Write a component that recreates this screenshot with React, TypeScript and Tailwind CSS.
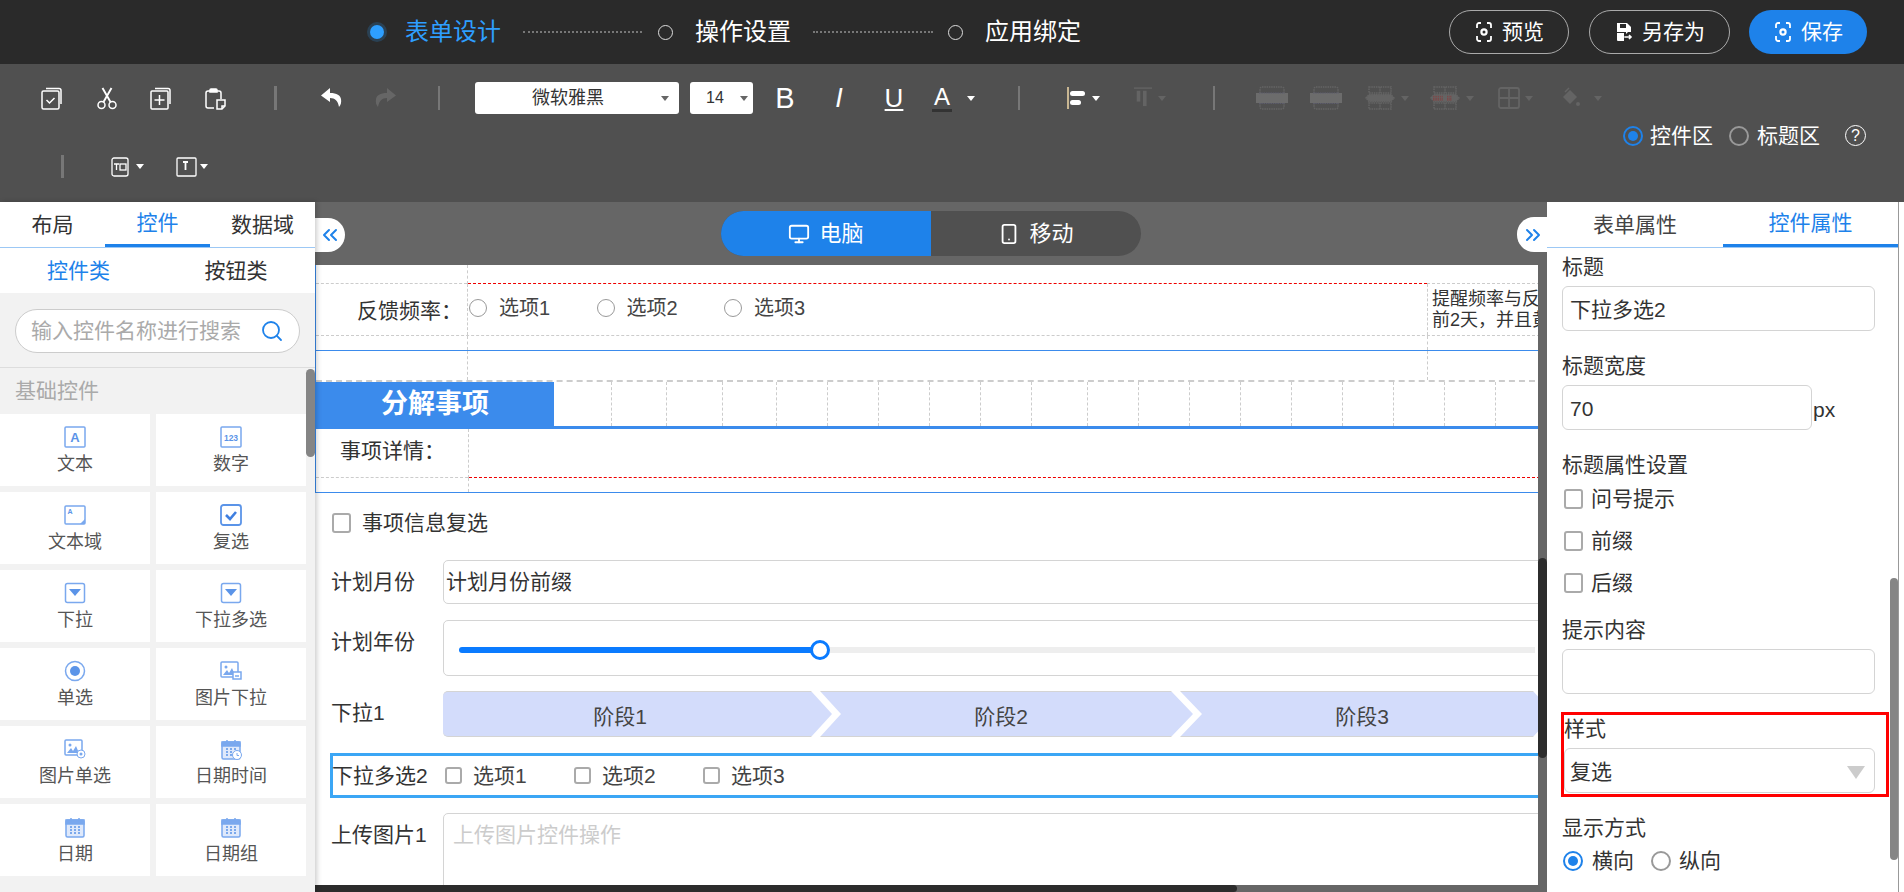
import React from "react";
import { Monitor, Smartphone, Search, ChevronsLeft, ChevronsRight } from "lucide-react";

const Caret = ({ c = "border-t-white" }: { c?: string }) => (
  <span className={`w-0 h-0 border-x-[4px] border-x-transparent border-t-[5px] ${c}`} />
);

const I = ({ children }: any) => (
  <svg width="22" height="23" viewBox="0 0 22 23" fill="none" stroke="#fff" strokeWidth={1.5}>{children}</svg>
);

const Cell = ({ children, cls = "w-[54px]" }: any) => <div className={`${cls} flex justify-center items-center shrink-0`}>{children}</div>;

const Scan = () => (
  <svg width="20" height="24" viewBox="0 0 20 24" fill="none" stroke="#fff" strokeWidth="1.8">
    <path d="M7 3H5a2 2 0 0 0-2 2v3M13 3h2a2 2 0 0 1 2 2v3M7 21H5a2 2 0 0 1-2-2v-3M13 21h2a2 2 0 0 0 2-2v-3" />
    <circle cx="10" cy="12" r="2.6" strokeWidth="2.2" />
  </svg>
);

const DG = "#646464";

const Split = ({ red = false }: { red?: boolean }) => (
  <svg width="30" height="24" viewBox="0 0 30 24" fill="none" stroke={DG} strokeWidth="1.500" strokeDasharray="1.500 0.800">
    <rect x="4" y="1" width="22" height="6" />
    <path d="M15 1v6M15 17v6" />
    <rect x="4" y="17" width="22" height="6" />
    <path d="M1 12l3-3.500h22l3 3.500-3 3.500H4z" fill={DG} />
    {red && <path d="M3 10.500h10M3 12.500h10M3 14h10M17 10.500h5M17 12.500h5M17 14h5" stroke="#7a4a4a" strokeWidth="1.300" />}
  </svg>
);

const Merge = () => (
  <svg width="32" height="24" viewBox="0 0 32 24" fill="none" stroke={DG} strokeWidth="1.500" strokeDasharray="1.500 0.800">
    <rect x="4" y="1" width="24" height="22" rx="2" />
    <rect x="0" y="7" width="32" height="10" fill="#6c6c6c" stroke="none" />
    <path d="M3 17.500h26" stroke="#5c5c6c" strokeWidth="1" />
    <path d="M3 7h26" stroke="#5c5c6c" strokeWidth="1" />
  </svg>
);

const Radio = ({ on = false, size = "w-[20px] h-[20px]", off = "border-[#999]" }: any) => (
  <span className={`${size} rounded-full border-2 shrink-0 flex items-center justify-center bg-transparent ${on ? "border-[#1e82ea]" : off}`}>
    {on && <span className="w-[10px] h-[10px] rounded-full bg-[#1e82ea]" />}
  </span>
);

const Check = ({ size = "w-[19px] h-[20px]" }: { size?: string }) => (
  <span className={`${size} rounded-[3px] border-2 border-[#aaa] bg-white shrink-0`} />
);

function TopBar() {
  return (
    <div className="h-[64px] bg-[#2a2a2a] flex items-center shrink-0">
      <span className="ml-[370px] w-[14px] h-[14px] rounded-full bg-[#2e9fff] shadow-[0_0_0_3px_rgba(46,159,255,0.2)]" />
      <span className="ml-[21px] w-[97px] text-[24px] leading-[30px] text-[#2e9fff] whitespace-nowrap">表单设计</span>
      <span className="ml-[21px] w-[119px] border-t-2 border-dotted border-[#777]" />
      <span className="ml-[16px] w-[15px] h-[15px] rounded-full border-[1.5px] border-[#ddd]" />
      <span className="ml-[22px] w-[96px] text-[24px] leading-[30px] text-white whitespace-nowrap">操作设置</span>
      <span className="ml-[22px] w-[120px] border-t-2 border-dotted border-[#777]" />
      <span className="ml-[15px] w-[15px] h-[15px] rounded-full border-[1.5px] border-[#ddd]" />
      <span className="ml-[22px] w-[96px] text-[24px] leading-[30px] text-white whitespace-nowrap">应用绑定</span>
      <div className="ml-auto mr-[37px] flex items-center">
        <button className="w-[120px] h-[44px] rounded-full border border-[#aaa] text-white text-[21px] flex items-center justify-center gap-[8px]"><Scan />预览</button>
        <button className="ml-[20px] w-[141px] h-[44px] rounded-full border border-[#aaa] text-white text-[21px] flex items-center justify-center gap-[8px]">
          <svg width="20" height="22" viewBox="0 0 20 22" fill="#fff"><path d="M3 2h10l4 4v5h-3l-2 2v-2H3zM6 3v4h6V3zM3 12h7v3l1 1-1 1v3H4a1 1 0 0 1-1-1z" /><path d="M11 16h6m-2-2 2 2-2 2" stroke="#fff" strokeWidth="1.6" fill="none" /></svg>
          另存为
        </button>
        <button className="ml-[19px] w-[118px] h-[44px] rounded-full bg-[#1e82ea] text-white text-[21px] flex items-center justify-center gap-[8px]"><Scan />保存</button>
      </div>
    </div>
  );
}

function Toolbar() {
  return (
    <div className="h-[138px] bg-[#505050] shrink-0 pt-[18px]">
      <div className="h-[32px] flex items-center pl-[25px]">
        <Cell>
          <I><path d="M5 1.500h13a2 2 0 0 1 2 2V17" /><rect x="1" y="4" width="17" height="18" rx="1.500" /><path d="m5.500 13 3 3 5-5" /></I>
        </Cell>
        <Cell cls="w-[55px]">
          <I><circle cx="5.500" cy="18" r="3.500" /><circle cx="16.500" cy="18" r="3.500" /><path d="M7.500 15 15.500 1M14.500 15 6.500 1" strokeWidth="1.900" /></I>
        </Cell>
        <Cell>
          <I><path d="M5 1.500h13a2 2 0 0 1 2 2V17" /><rect x="1" y="4" width="17" height="18" rx="1" /><path d="M9.500 8v10M4.500 13h10" /></I>
        </Cell>
        <Cell>
          <I><path d="M10 21H4a2 2 0 0 1-2-2V6a2 2 0 0 1 2-2h11a2 2 0 0 1 2 2v6" /><path d="M6 5V3a1 1 0 0 1 1-1h5a1 1 0 0 1 1 1v2z" fill="#fff" /><path d="M13 13h8v6l-3 3h-5z" fill="#505050" /><path d="M18 22v-3h3" /></I>
        </Cell>
        <span className="ml-[32px] w-[3px] h-[24px] bg-[#777]" />
        <div className="ml-[27px] flex">
          <Cell><svg width="21" height="21" viewBox="0 0 21 21" fill="#fff"><path d="M9 0 0 7.500 9 14v-4c5 0 8 3 9 9 2-2 2.500-5 2-8-.7-3.500-4-6-11-6z" /></svg></Cell>
          <Cell><svg width="21" height="21" viewBox="0 0 21 21" fill="#666"><path d="M12 0l9 7.500L12 14v-4c-5 0-8 3-9 9-2-2-2.500-5-2-8 .7-3.500 4-6 11-6z" /></svg></Cell>
        </div>
        <span className="ml-[26px] w-[2px] h-[24px] bg-[#777]" />
        <div className="ml-[35px] w-[204px] h-[32px] bg-white rounded-[3px] flex items-center relative">
          <span className="w-[186px] text-center text-[18px] text-[#333]">微软雅黑</span>
          <Caret c="border-t-[#666]" />
        </div>
        <div className="ml-[11px] w-[63px] h-[32px] bg-white rounded-[3px] flex items-center">
          <span className="w-[50px] text-center text-[16px] text-[#333]">14</span>
          <Caret c="border-t-[#666]" />
        </div>
        <Cell cls="ml-[5px] w-[54px]"><span className="text-[29px] leading-[32px] text-white font-medium">B</span></Cell>
        <Cell cls="w-[54px]"><span className="text-[27px] leading-[32px] text-white italic">I</span></Cell>
        <Cell cls="ml-[1px] w-[54px]"><span className="text-[26px] leading-[28px] text-white underline underline-offset-2">U</span></Cell>
        <div className="ml-[11px] w-[20px] flex flex-col items-center">
          <span className="text-[24px] leading-[24px] text-white font-medium">A</span>
          <span className="w-[20px] h-[3px] bg-[#333]" />
        </div>
        <span className="ml-[15px] flex"><Caret /></span>
        <span className="ml-[43px] w-[2px] h-[24px] bg-[#777]" />
        <span className="ml-[47px] w-[18px] flex">
          <svg width="18" height="24" viewBox="0 0 18 24"><path d="M1 1v22" stroke="#f0d8a8" strokeWidth="1.5" /><rect x="3" y="5" width="15" height="5" rx="2.500" fill="#fff" /><rect x="3" y="14" width="11" height="5" rx="2.500" fill="#fff" /></svg>
        </span>
        <span className="ml-[7px] flex"><Caret /></span>
        <span className="ml-[34px] w-[18px] flex">
          <svg width="20" height="24" viewBox="0 0 20 24"><path d="M0 1h20" stroke={DG} strokeWidth="1.500" /><rect x="3" y="4" width="4" height="12" fill={DG} /><rect x="10" y="4" width="4" height="17" fill={DG} /></svg>
        </span>
        <span className="ml-[6px] flex"><Caret c="border-t-[#646464]" /></span>
        <span className="ml-[47px] w-[2px] h-[24px] bg-[#777]" />
        <span className="ml-[41px] flex"><Merge /></span>
        <span className="ml-[22px] flex"><Merge /></span>
        <span className="ml-[23px] flex"><Split /></span>
        <span className="ml-[6px] flex"><Caret c="border-t-[#646464]" /></span>
        <span className="ml-[21px] flex"><Split red /></span>
        <span className="ml-[6px] flex"><Caret c="border-t-[#646464]" /></span>
        <span className="ml-[24px] flex">
          <svg width="22" height="22" viewBox="0 0 22 22" fill="none" stroke={DG} strokeWidth="1.800"><rect x="1" y="1" width="20" height="20" rx="2" /><path d="M11 1v20M1 11h20" /></svg>
        </span>
        <span className="ml-[5px] flex"><Caret c="border-t-[#646464]" /></span>
        <span className="ml-[28px] flex">
          <svg width="20" height="24" viewBox="0 0 20 24" fill={DG}><path d="M8 2 4 6" stroke={DG} strokeWidth="1.500" /><path d="M9 4l7 7-7 7-7-7z" /><circle cx="17" cy="18" r="2" /></svg>
        </span>
        <span className="ml-[13px] flex"><Caret c="border-t-[#646464]" /></span>
      </div>
      <div className="mt-[11px] h-[21px] flex items-center justify-end pr-[38px] text-white text-[21px]">
        <Radio on />
        <span className="ml-[7px] w-[64px] whitespace-nowrap leading-[21px]">控件区</span>
        <span className="ml-[15px]"><Radio /></span>
        <span className="ml-[8px] w-[64px] whitespace-nowrap leading-[21px]">标题区</span>
        <span className="ml-[24px] w-[21px] h-[21px] rounded-full border-[1.5px] border-white flex items-center justify-center text-[16px] leading-none">?</span>
      </div>
      <div className="mt-[9px] h-[23px] flex items-center pl-[61px]">
        <span className="w-[3px] h-[23px] bg-[#777]" />
        <span className="ml-[47px] flex">
          <svg width="18" height="20" viewBox="0 0 18 20" fill="none" stroke="#fff" strokeWidth="1.300"><rect x="1" y="1" width="16" height="18" rx="2" /><path d="M3 7h5M5.500 7v6" /><rect x="9" y="7" width="6" height="6" /></svg>
        </span>
        <span className="ml-[7px] flex"><Caret /></span>
        <span className="ml-[32px] flex">
          <svg width="21" height="20" viewBox="0 0 21 20" fill="none" stroke="#fff" strokeWidth="1.300"><rect x="1" y="1" width="19" height="18" rx="1" /><path d="M7 5h5M9.500 5v8" strokeWidth="1.800" /></svg>
        </span>
        <span className="ml-[3px] flex"><Caret /></span>
      </div>
    </div>
  );
}

const Sq = ({ children }: any) => (
  <svg width="22" height="22" viewBox="0 0 22 22" fill="none" stroke="#7aa8ee" strokeWidth="1.500">{children}</svg>
);
const T = ({ x = 11, y = 15, s = 11, children, a = "middle" }: any) => (
  <text x={x} y={y} fontSize={s} fontWeight="700" fill="#5b94e8" stroke="none" textAnchor={a} fontFamily="Liberation Sans">{children}</text>
);
const Cal = ({ extra }: any) => (
  <>
    <rect x="2" y="4" width="18" height="17" rx="1.500" fill="#dfe9fb" />
    <path d="M2 4h18v4H2z" fill="#7aa8ee" />
    <path d="M7 2v4M15 2v4" />
    <path d="M6 11h2M10 11h2M14 11h2M6 14h2M10 14h2M14 14h2M6 17h2M10 17h2M14 17h2" stroke="#5b94e8" strokeWidth="1.600" />
    {extra}
  </>
);
const ImgIcon = () => (<><rect x="1" y="2" width="17" height="15" rx="1" /><circle cx="6" cy="7" r="1.500" fill="#7aa8ee" stroke="none" /><path d="M3 15l4-5 2 3 3-5 3 7z" fill="#7aa8ee" stroke="none" /></>);
const Drop = () => (<><rect x="1.500" y="1.500" width="19" height="19" rx="2" /><path d="M5 7h12l-6 7z" fill="#5b94e8" stroke="none" /></>);

const cards: [string, React.ReactNode][] = [
  ["文本", <Sq><rect x="1" y="1" width="20" height="20" rx="1" /><T y={16} s={13}>A</T></Sq>],
  ["数字", <Sq><rect x="1" y="1" width="20" height="20" rx="1" /><T y={14.500} s={8.500}>123</T></Sq>],
  ["文本域", <Sq><rect x="1" y="2" width="20" height="18" rx="1" /><T x={6} y={10} s={7}>A</T><path d="M21 15v5h-5z" fill="#7aa8ee" stroke="none" /></Sq>],
  ["复选", <Sq><rect x="1" y="1" width="20" height="20" rx="2.500" stroke="#5b94e8" strokeWidth="1.800" /><path d="m6 11 4 4 6-7" stroke="#3f7fe0" strokeWidth="2.600" /></Sq>],
  ["下拉", <Sq><Drop /></Sq>],
  ["下拉多选", <Sq><Drop /></Sq>],
  ["单选", <Sq><circle cx="11" cy="11" r="9.500" /><circle cx="11" cy="11" r="5" fill="#5b94e8" stroke="none" /></Sq>],
  ["图片下拉", <Sq><ImgIcon /><rect x="13" y="12" width="8" height="7" fill="#fff" /><path d="M15 16h4" /></Sq>],
  ["图片单选", <Sq><ImgIcon /><circle cx="17" cy="16" r="4" fill="#fff" strokeWidth="1" /><circle cx="17" cy="16" r="1.500" fill="#7aa8ee" stroke="none" /></Sq>],
  ["日期时间", <Sq><Cal extra={<><circle cx="17" cy="17" r="4.500" fill="#fff" strokeWidth="1" /><path d="M17 15v2.500h2" strokeWidth="1" /></>} /></Sq>],
  ["日期", <Sq><Cal /></Sq>],
  ["日期组", <Sq><Cal /></Sq>],
];

function LeftPanel() {
  return (
    <div className="w-[315px] shrink-0 bg-[#f2f2f2] flex flex-col relative z-10 shadow-[2px_0_5px_rgba(0,0,0,0.2)]">
      <div className="h-[46px] bg-white border-b border-[#9cc8f5] flex text-[21px] text-[#333] shrink-0">
        <div className="w-[105px] h-[45px] flex items-center justify-center">布局</div>
        <div className="w-[105px] h-[45px] flex items-center justify-center text-[#1e82ea] border-b-[3px] border-[#1e82ea]">控件</div>
        <div className="w-[105px] h-[45px] flex items-center justify-center">数据域</div>
      </div>
      <div className="h-[45px] bg-white flex text-[21px] text-[#333] shrink-0">
        <div className="w-[157px] flex items-center justify-center text-[#1e82ea]">控件类</div>
        <div className="w-[158px] flex items-center justify-center">按钮类</div>
      </div>
      <div className="h-[75px] border-b border-[#ddd] shrink-0 pt-[16px] px-[15px]">
        <div className="h-[44px] w-[285px] rounded-full border border-[#ccc] bg-white flex items-center pl-[15px] pr-[15px] justify-between">
          <span className="text-[21px] text-[#aaa] whitespace-nowrap">输入控件名称进行搜索</span>
          <Search size={24} color="#1e82ea" strokeWidth={1.800} />
        </div>
      </div>
      <div className="h-[46px] pl-[15px] flex items-center text-[21px] text-[#aaa] shrink-0">基础控件</div>
      <div className="flex">
        <div className="w-[306px] grid grid-cols-[150px_150px] gap-[6px]">
          {cards.map(([n, ic]) => (
            <div key={n} className="h-[72px] bg-white flex flex-col items-center pt-[12px]">
              <span className="h-[22px] flex">{ic}</span>
              <span className="text-[18px] leading-[24px] mt-[4px] text-[#555] whitespace-nowrap">{n}</span>
            </div>
          ))}
        </div>
      </div>
      <div className="absolute left-[306px] top-[167px] w-[9px] h-[88px] rounded-full bg-[#858585]" />
    </div>
  );
}

const gd = "border-dashed border-[#ccc]";
const rd = "border-dashed border-[#e00]";

function Sheet() {
  const vlines = [57, 55, 56, 54, 51, 51, 51, 51, 51, 56, 51, 51, 51, 51, 51, 51, 51, 51, 51];
  return (
    <div className="border-l border-[#3b8bec] w-[1230px]">
      <div className="flex h-[19px]">
        <div className={`w-[151px] border-b ${gd} overflow-hidden pl-[41px] text-[21px] leading-[24px] text-[#333] whitespace-nowrap`}>
          <div className="-mt-[23px]">反馈频次：</div>
        </div>
        <div className={`w-[960px] border-l ${gd} relative`}>
          <div className={`absolute inset-x-0 bottom-0 border-b ${rd}`} />
        </div>
        <div className={`flex-1 border-b ${gd}`} />
      </div>
      <div className={`flex h-[52px] border-b ${gd}`}>
        <div className="w-[151px] pl-[41px] pt-[15px] text-[21px] leading-[24px] text-[#333] whitespace-nowrap">反馈频率：</div>
        <div className={`w-[960px] border-l ${gd} flex pl-[1px] pt-[12px] text-[20px] text-[#444]`}>
          {["选项1", "选项2", "选项3"].map((t) => (
            <div key={t} className="w-[127.500px] flex items-start">
              <span className="mt-[3px] w-[18px] h-[18px] rounded-full border border-[#999] shrink-0" />
              <span className="ml-[12px] leading-[24px]">{t}</span>
            </div>
          ))}
        </div>
        <div className={`flex-1 border-l ${gd} pl-[4px] pt-[5px] text-[18px] leading-[21px] text-[#333] overflow-hidden whitespace-nowrap`}>
          <div>提醒频率与反</div>
          <div>前2天，并且黄</div>
        </div>
      </div>
      <div className="flex h-[15px] border-b border-[#3b8bec]">
        <div className={`w-[151px]`} />
        <div className={`w-[960px] border-l ${gd}`} />
        <div className={`flex-1 border-l ${gd}`} />
      </div>
      <div className={`flex h-[31px] border-b-2 ${gd}`}>
        <div className="w-[151px]" />
        <div className={`w-[960px] border-l ${gd}`} />
        <div className={`flex-1 border-l ${gd}`} />
      </div>
      <div className="flex h-[47px] border-b-[3px] border-[#3b8bec]">
        <div className="w-[238px] shrink-0 bg-[#3b8bec] text-white text-[27px] font-bold flex items-center justify-center">分解事项</div>
        {vlines.map((w, i) => (
          <div key={i} style={{ width: w }} className={`shrink-0 ${i > 0 ? `border-l ${gd}` : ""}`} />
        ))}
      </div>
      <div className="flex h-[49px]">
        <div className={`w-[152px] border-b ${gd} pl-[24px] pt-[10px] text-[21px] leading-[24px] text-[#333] whitespace-nowrap`}>事项详情：</div>
        <div className={`flex-1 border-l ${gd} border-b-0 relative`}>
          <div className={`absolute inset-x-0 bottom-0 border-b ${rd}`} />
        </div>
      </div>
      <div className="flex h-[15px] border-b border-[#3b8bec]">
        <div className="w-[152px]" />
        <div className={`flex-1 border-l ${gd}`} />
      </div>
    </div>
  );
}

const boxCls = "w-[1110px] shrink-0 border border-[#d4d4d4] rounded-[5px]";
const lab = "w-[112px] -ml-[1px] shrink-0 leading-[44px]";

function Form() {
  return (
    <div className="pl-[17px] text-[21px] text-[#333]">
      <div className="mt-[20px] h-[20px] flex items-center">
        <Check />
        <span className="ml-[11px] leading-[24px]">事项信息复选</span>
      </div>
      <div className="mt-[27px] flex h-[44px]">
        <span className={lab}>计划月份</span>
        <div className={`${boxCls} pl-[2px] leading-[42px]`}>计划月份前缀</div>
      </div>
      <div className="mt-[16px] flex h-[56px]">
        <span className={lab}>计划年份</span>
        <div className={`${boxCls} relative flex items-center pl-[15px]`}>
          <span className="w-[361px] h-[6px] bg-[#0a7bff] rounded-l-full mt-[4px]" />
          <span className="w-[20px] h-[20px] -ml-[10px] rounded-full border-[3px] border-[#0a7bff] bg-white mt-[4px] z-10" />
          <span className="w-[715px] h-[6px] -ml-[10px] bg-[#eeeeee] mt-[4px]" />
        </div>
      </div>
      <div className="mt-[15px] flex h-[46px]">
        <span className={lab}>下拉1</span>
        <div className="w-[1110px] shrink-0 relative flex bg-[#d3dcfb] border-y border-[#d4d4d4] rounded-l-[5px] leading-[50px] text-center text-[#444]">
          <span className="w-[354px]">阶段1</span>
          <span className="w-[408px]">阶段2</span>
          <span className="w-[314px]">阶段3</span>
          <svg className="absolute left-0 -top-px" width="1110" height="46" fill="#fff">
            <polygon points="368,0 377,0 398,23 377,46 368,46 389,23" />
            <polygon points="728,0 737,0 759,23 737,46 728,46 750,23" />
            <polygon points="1090,0 1099,0 1120,23 1099,46 1090,46 1111,23" />
          </svg>
        </div>
      </div>
      <div className="mt-[16px] -ml-[2px] flex h-[45px] w-[1240px] border-[3px] border-[#3ba6f5] items-center">
        <span className="w-[112px] -ml-[1px] mr-[1px] shrink-0 whitespace-nowrap">下拉多选2</span>
        {["选项1", "选项2", "选项3"].map((t) => (
          <div key={t} className="w-[129px] flex items-center text-[#444]">
            <Check size="w-[17px] h-[17px]" />
            <span className="ml-[11px]">{t}</span>
          </div>
        ))}
      </div>
      <div className="mt-[15px] flex h-[100px]">
        <span className={lab}>上传图片1</span>
        <div className={`${boxCls} pl-[9px] pt-[1px] leading-[40px] text-[#ccc]`}>上传图片控件操作</div>
      </div>
    </div>
  );
}

function Center() {
  return (
    <div className="flex-1 min-w-0 bg-[#666] flex flex-col relative">
      <div className="h-[63px] shrink-0 flex items-start pt-[9px] pl-[406px]">
        <div className="h-[45px] w-[420px] rounded-full bg-[#505050] flex overflow-hidden text-white text-[22px]">
          <div className="w-[210px] bg-[#1e82ea] flex items-center justify-center gap-[9px]"><Monitor size={22} />电脑</div>
          <div className="w-[210px] flex items-center justify-center gap-[9px]"><Smartphone size={22} />移动</div>
        </div>
      </div>
      <div className="flex-1 min-h-0 flex">
        <div className="w-[1223px] bg-white overflow-hidden">
          <Sheet />
          <Form />
        </div>
        <div className="w-[9px] relative bg-[#666]">
          <div className="absolute top-[293px] h-[200px] w-[9px] rounded-full bg-[#2c2c2c]" />
        </div>
      </div>
      <div className="h-[7px] shrink-0 bg-[#666]">
        <div className="w-[922px] h-[7px] bg-[#2c2c2c] rounded-r-full" />
      </div>
      <button className="absolute left-0 top-[16px] w-[30px] h-[34px] bg-white rounded-r-[17px] flex items-center justify-center text-[#1e82ea]"><ChevronsLeft size={24} /></button>
      <button className="absolute right-0 top-[15px] w-[30px] h-[35px] bg-white rounded-l-[17px] flex items-center justify-end pr-[2px] text-[#1e82ea] z-20"><ChevronsRight size={24} /></button>
    </div>
  );
}

const Inp = ({ children, w = "w-[313px]", pl = "pl-[7px]" }: any) => (
  <div className={`${w} h-[45px] border border-[#d4d4d4] rounded-[6px] ${pl} leading-[45px] text-[21px] text-[#333] shrink-0`}>{children}</div>
);

function RightPanel() {
  return (
    <div className="w-[352px] shrink-0 bg-white flex flex-col relative text-[#333] text-[21px] border-r border-[#999]">
      <div className="h-[46px] border-b border-[#9cc8f5] flex shrink-0">
        <div className="w-[176px] h-[45px] flex items-center justify-center text-[#444]">表单属性</div>
        <div className="w-[175px] h-[45px] flex items-center justify-center text-[#1e82ea] border-b-[3px] border-[#1e82ea]">控件属性</div>
      </div>
      <div className="pl-[15px] leading-[30px]">
        <div className="mt-[4px] h-[30px]">标题</div>
        <div className="mt-[4px]"><Inp>下拉多选2</Inp></div>
        <div className="mt-[20px] h-[30px]">标题宽度</div>
        <div className="mt-[4px] flex items-center">
          <Inp w="w-[250px]">70</Inp>
          <span className="ml-[1px] mt-[4px]">px</span>
        </div>
        <div className="mt-[20px] h-[30px]">标题属性设置</div>
        <div className="mt-[9px] h-[20px] pl-[2px] flex items-center"><Check /><span className="ml-[8px]">问号提示</span></div>
        <div className="mt-[22px] h-[20px] pl-[2px] flex items-center"><Check /><span className="ml-[8px]">前缀</span></div>
        <div className="mt-[22px] h-[20px] pl-[2px] flex items-center"><Check /><span className="ml-[8px]">后缀</span></div>
        <div className="mt-[22px] h-[30px]">提示内容</div>
        <div className="mt-[4px]"><Inp /></div>
        <div className="mt-[18px] -ml-[1px] w-[328px] h-[85px] border-[3px] border-[#f00]">
          <div className="h-[30px] -mt-[1px]">样式</div>
          <div className="mt-[4px] relative w-[311px]">
            <Inp w="w-[311px]" pl="pl-[5px]">复选</Inp>
            <span className="absolute right-[10px] top-[18px] w-0 h-0 border-x-[9px] border-x-transparent border-t-[13px] border-t-[#ccc]" />
          </div>
        </div>
        <div className="mt-[16px] h-[30px]">显示方式</div>
        <div className="mt-[7px] h-[22px] flex items-center pl-[1px]">
          <Radio on />
          <span className="ml-[9px]">横向</span>
          <span className="ml-[17px]"><Radio /></span>
          <span className="ml-[8px]">纵向</span>
        </div>
      </div>
      <div className="absolute right-0 top-[376px] h-[282px] w-[8px] rounded-full bg-[#858585]" />
    </div>
  );
}

export default function App() {
  return (
    <div className="w-[1904px] h-[892px] overflow-hidden flex flex-col [font-family:'Liberation_Sans','Noto_Sans_CJK_SC',sans-serif]">
      <TopBar />
      <Toolbar />
      <div className="flex-1 min-h-0 flex">
        <LeftPanel />
        <Center />
        <RightPanel />
        <div className="w-[5px] shrink-0 bg-white" />
      </div>
    </div>
  );
}
